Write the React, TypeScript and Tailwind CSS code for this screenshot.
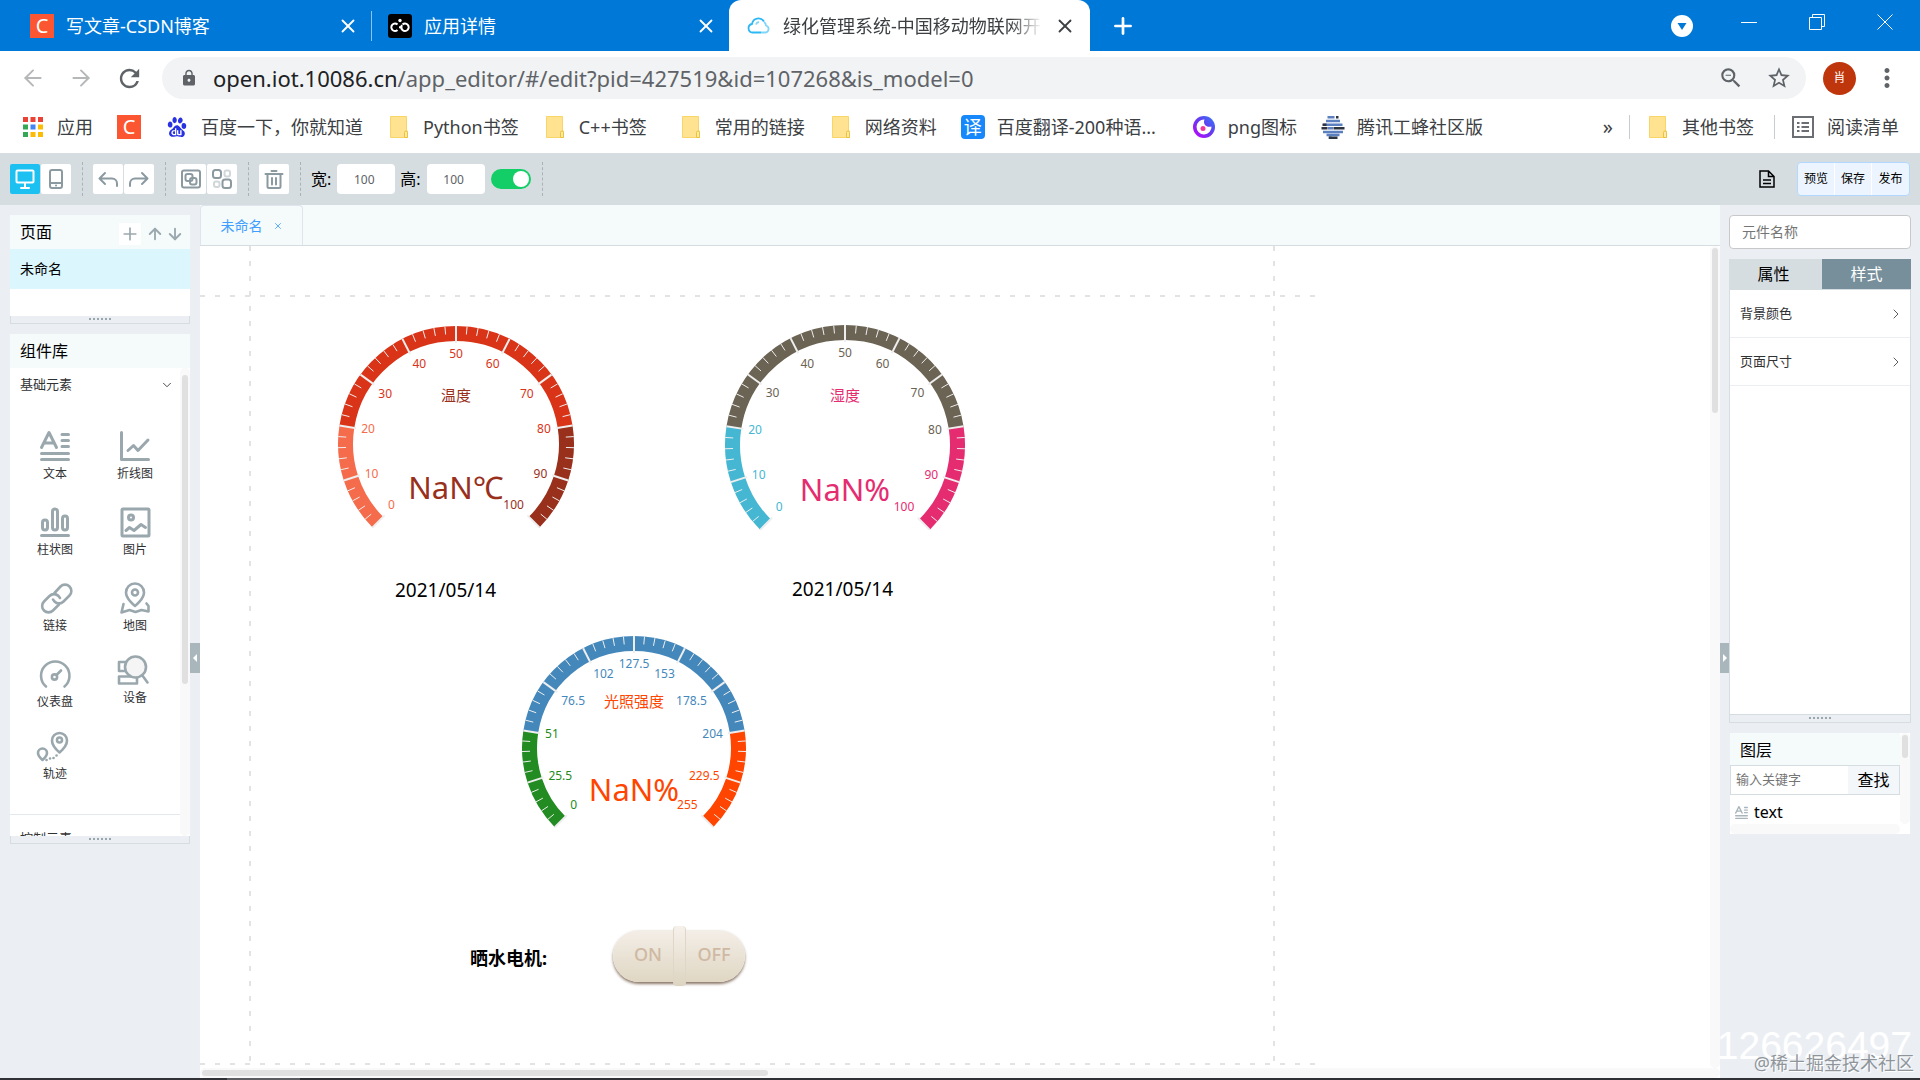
import React from 'react';
import { ArrowLeft, ArrowRight, ArrowUp, ArrowDown, ChevronDown, ChevronRight, Plus, X } from 'lucide-react';
import { MdLock, MdRefresh, MdStarBorder, MdMoreVert, MdZoomOut } from 'react-icons/md';
import { SiBaidu } from 'react-icons/si';

/* ---------- browser icons ---------- */

function CsdnLogo() {
  return (
    <span className="flex h-6 w-6 shrink-0 items-center justify-center bg-[#fc5531] text-xl leading-none text-white">C</span>
  );
}

function AppLogo() {
  return (
    <svg viewBox="0 0 24 24" className="h-6 w-6 shrink-0" fill="none" stroke="#fff" strokeWidth="2">
      <rect width="24" height="24" rx="3" fill="#000" stroke="none" />
      <path d="M9.500 10.500a3.700 3.700 0 1 0 0 5.500M11 13.200h3.500M14.500 10.500a3.700 3.700 0 1 1 0 5.500 3.700 3.700 0 0 1-.5-5" />
      <circle cx="12" cy="6.500" r="1.700" fill="#fff" stroke="none" />
    </svg>
  );
}

function CloudLogo() {
  return (
    <svg viewBox="0 0 24 24" className="h-6 w-6 shrink-0" fill="none" stroke="#2db7f5" strokeWidth="1.800">
      <path d="M14 18.500H5.500a4.300 4.300 0 0 1-.5-8.500 6.500 6.500 0 0 1 12-2.500" />
      <path d="M17 8a4.500 4.500 0 0 1 2 3.500 3.600 3.600 0 0 1-.5 7H14" stroke="#7fd6fb" />
      <path d="M9 10.500a3.500 3.500 0 0 1 3-2.500" stroke="#7fd6fb" />
    </svg>
  );
}

function AppsGrid() {
  const colors = ['#ea4335', '#ea4335', '#ea4335', '#34a853', '#4285f4', '#fbbc04', '#34a853', '#fbbc04', '#fbbc04'];
  return (
    <svg viewBox="0 0 20 20" className="h-5 w-5">
      {colors.map((c, i) => (
        <rect key={i} x={(i % 3) * 7.5} y={Math.floor(i / 3) * 7.5} width="5" height="5" fill={c} />
      ))}
    </svg>
  );
}

function Folder() {
  return (
    <svg viewBox="0 0 24 24" className="h-6 w-6" fill="#ffe391" stroke="#f8d566">
      <path d="M3.500 1.500h16v14.500h1v6.500h-17z" />
      <path d="M17.500 22.500v-5a1.500 1.500 0 0 1 3 0v5z" fill="#ffe9a6" stroke="#ecc23c" />
    </svg>
  );
}

function PngLogo() {
  return (
    <svg viewBox="0 0 24 24" className="h-6 w-6" fill="none">
      <defs>
        <linearGradient id="png-ring" x1="1" y1="0" x2="0" y2="1">
          <stop offset="0" stopColor="#2f7df6" />
          <stop offset=".5" stopColor="#6a35f0" />
          <stop offset="1" stopColor="#c800ff" />
        </linearGradient>
      </defs>
      <circle cx="12" cy="12" r="11" fill="url(#png-ring)" />
      <path d="M12.500 4.500c-1 2-.5 4.500 1 6 1.500 1.400 4 1.700 6 1a7.500 7.500 0 1 1-7-7z" fill="#fff" />
      <circle cx="11" cy="13.500" r="2.500" fill="#f0389c" />
    </svg>
  );
}

function TencentBee() {
  return (
    <svg viewBox="0 0 24 24" className="h-6 w-6" strokeWidth="2.400">
      <path d="M6.500 2.200h7M5 6h14M2.500 9.700h19M7 13.200h5M2 17h20M5.500 20h13M7.500 22.800h3" stroke="#5b7fbf" />
      <path d="M15 2.200h2.500M.5 13.200h6M12.500 13.200h11M1.500 9.700h4M8 22.800h8.500" stroke="#2c3440" />
    </svg>
  );
}

function ListIcon() {
  return (
    <svg viewBox="0 0 24 24" className="h-6 w-6" fill="none" stroke="#6b6f73" strokeWidth="2">
      <rect x="2" y="2" width="20" height="20" />
      <path d="M6 8h2.500M6 12h2.500M6 16h2.500M10.500 8H18M10.500 12H18M10.500 16H18" />
    </svg>
  );
}

/* ---------- editor icons ---------- */

function Icon({ children, className = 'h-[30px] w-[30px]' }) {
  return (
    <svg viewBox="0 0 30 30" className={`overflow-visible ${className}`} fill="none" stroke="currentColor" strokeWidth="3" strokeLinecap="round" strokeLinejoin="round">
      {children}
    </svg>
  );
}

const textShapes = (
  <>
    <path d="M1.500 16.500L9 1.500l7.500 15M4.500 12h9M22 3.500h6.500M22 9.500h6.500M22 15.500h6.500M1.500 22.500h27M1.500 28.500h27" />
  </>
);

const components = [
  { name: '文本', shape: textShapes },
  { name: '折线图', shape: <path d="M1.500 1.500v27h27M8 19.500l5.500-5 4.500 5L28 9" /> },
  {
    name: '柱状图',
    shape: (
      <>
        <rect x="2.500" y="13" width="5" height="10" rx="2.500" />
        <rect x="12.500" y="2" width="5" height="21" rx="2.500" />
        <rect x="22.500" y="9" width="5" height="14" rx="2.500" />
        <path d="M1.500 28.500h27" />
      </>
    ),
  },
  {
    name: '图片',
    shape: (
      <>
        <rect x="2" y="2" width="27" height="27" rx="1" />
        <circle cx="11" cy="10.500" r="2.500" />
        <path d="M6 23.500l3.500-3 4.500 3 7-6 4.500 3" />
      </>
    ),
  },
  {
    name: '链接',
    shape: (
      <g strokeWidth="2.600">
        <path d="M14.500 10l6-6.500a6.300 6.300 0 0 1 9 9l-6 6a6.300 6.300 0 0 1-9 0l-1.500-2" />
        <path d="M19 21.500l-6 6a6.300 6.300 0 0 1-9-9l5.500-5.500a6.300 6.300 0 0 1 9 0l1.500 2" />
      </g>
    ),
  },
  {
    name: '地图',
    shape: (
      <g strokeWidth="2.600">
        <path d="M15 23S6 16 6 9.500a9 9 0 0 1 18 0C24 16 15 23 15 23z" />
        <circle cx="15" cy="9.500" r="3" />
        <path d="M3.500 21L1.500 29.500l8-2.500 6 2 6-2 7 1.500V23l-2-2.500" />
      </g>
    ),
  },
  {
    name: '仪表盘',
    shape: (
      <g strokeWidth="2.600">
        <path d="M6 27.500a14.200 14.200 0 1 1 18.500 0" />
        <circle cx="14.500" cy="18" r="2.600" />
        <path d="M16.500 16l4.500-4.500" />
      </g>
    ),
  },
  {
    name: '设备',
    tight: true,
    shape: (
      <g strokeWidth="2.600">
        <path d="M8 7H-1v9h9M-1 21.500h18v7H-1z" />
        <path d="M22 20l5.500 7.500" />
        <circle cx="15.500" cy="12" r="10.500" fill="#f5f5f5" />
      </g>
    ),
  },
  {
    name: '轨迹',
    tight: true,
    shape: (
      <g strokeWidth="2.600">
        <path d="M19.500 21.500S12 15 12 9.500a7.500 7.500 0 0 1 15 0c0 5.500-7.500 12-7.500 12z" />
        <circle cx="19.500" cy="9" r="2.500" />
        <path d="M2.500 29S-2 25-2 22a4.500 4.500 0 0 1 9 0c0 3-4.500 7-4.500 7z" />
        <path d="M6.500 29h.1M10 27.500h.1M13.500 27h.1M16.500 24.500h.1" />
      </g>
    ),
  },
];

/* ---------- gauge ---------- */

const range = (n) => Array.from({ length: n }, (_, i) => i);

function Gauge({ radius, labels, colors, title, value, accent, className }) {
  const c = radius + 2;
  const point = (t, r) => {
    const a = ((225 - 270 * t) * Math.PI) / 180;
    return [c + r * Math.cos(a), c - r * Math.sin(a)];
  };
  const arc = (from, to) => {
    const r = radius - 7.5;
    const [x1, y1] = point(from, r);
    const [x2, y2] = point(to, r);
    return `M${x1} ${y1}A${r} ${r} 0 0 1 ${x2} ${y2}`;
  };
  const tick = (t, length) => {
    const [x1, y1] = point(t, radius);
    const [x2, y2] = point(t, radius - length);
    return `M${x1} ${y1}L${x2} ${y2}`;
  };
  return (
    <svg width={c * 2} height={c * 2} className={`absolute ${className}`} fill="none">
      <path d={arc(0, 0.2)} stroke={colors[0]} strokeWidth="15" />
      <path d={arc(0.2, 0.8)} stroke={colors[1]} strokeWidth="15" />
      <path d={arc(0.8, 1)} stroke={colors[2]} strokeWidth="15" />
      {range(51).map((i) => (
        <path key={i} d={tick(i / 50, i % 5 ? 8 : 17)} stroke="#eee" strokeWidth={i % 5 ? 1 : 2} />
      ))}
      {labels.map((label, i) => {
        const t = i / 10;
        const [x, y] = point(t, radius - 22);
        const ux = (x - c) / (radius - 22);
        const uy = (y - c) / (radius - 22);
        const dy = uy < -0.4 ? 6 : uy > 0.4 ? -7 : 0;
        return (
          <text
            key={label}
            x={x}
            y={y + dy + 4}
            fontSize="12"
            fill={i <= 2 ? colors[0] : i <= 8 ? colors[1] : colors[2]}
            textAnchor={ux < -0.4 ? 'start' : ux > 0.4 ? 'end' : 'middle'}
          >
            {label}
          </text>
        );
      })}
      <text x={c} y={c - radius * 0.4 + 4} fontSize="15" fill={accent} textAnchor="middle">{title}</text>
      <text x={c} y={c + radius * 0.4 + 8} fontSize="31" fill={accent} textAnchor="middle">{value}</text>
    </svg>
  );
}

const percent = ['0', '10', '20', '30', '40', '50', '60', '70', '80', '90', '100'];
const light = ['0', '25.5', '51', '76.5', '102', '127.5', '153', '178.5', '204', '229.5', '255'];

/* ---------- browser chrome ---------- */

function BrowserTabs() {
  return (
    <div className="flex h-[51px] shrink-0 items-center bg-[#0078d7] text-lg text-white">
      <div className="flex w-[371px] items-center gap-3 pr-3 pl-[30px]">
        <CsdnLogo />
        <span className="flex-1 truncate">写文章-CSDN博客</span>
        <button aria-label="关闭"><X size={22} /></button>
      </div>
      <div className="flex w-[358px] items-center gap-3 pr-3">
        <span className="mr-1 h-[30px] w-px bg-[#8ec3ef]" />
        <AppLogo />
        <span className="flex-1 truncate">应用详情</span>
        <button aria-label="关闭"><X size={22} /></button>
      </div>
      <div className="flex h-full w-[361px] items-center gap-3 rounded-t-xl bg-white pr-[14px] pl-[18px] text-[#3c4043]">
        <CloudLogo />
        <span className="flex-1 overflow-hidden whitespace-nowrap [mask-image:linear-gradient(to_right,#000_88%,transparent)]">绿化管理系统-中国移动物联网开放平台</span>
        <button aria-label="关闭"><X size={22} /></button>
      </div>
      <button aria-label="新标签页" className="ml-5"><Plus size={26} strokeWidth={2.5} /></button>
      <div className="ml-auto flex items-center gap-[52px] pr-[27px]">
        <button aria-label="搜索标签页" className="-mr-1">
          <svg viewBox="0 0 22 22" className="h-[22px] w-[22px]">
            <circle cx="11" cy="11" r="11" fill="#fff" />
            <path d="M6.500 8h9L11 15z" fill="#0078d7" />
          </svg>
        </button>
        <button aria-label="最小化" className="pb-2">
          <svg viewBox="0 0 16 16" className="h-4 w-4" stroke="#fff"><path d="M0 8.500h16" /></svg>
        </button>
        <button aria-label="还原" className="pb-2">
          <svg viewBox="0 0 16 16" className="h-4 w-4" stroke="#fff" fill="none"><path d="M.5 3.500h12v12H.5zM3.500 3V.5h12v12H13" /></svg>
        </button>
        <button aria-label="关闭窗口" className="pb-2">
          <svg viewBox="0 0 16 16" className="h-4 w-4" stroke="#fff"><path d="M.5.5l15 15M15.500.5l-15 15" /></svg>
        </button>
      </div>
    </div>
  );
}

function AddressBar() {
  return (
    <div className="flex h-[54px] shrink-0 items-center bg-white pr-[18px] pl-5 text-[#5f6368]">
      <button aria-label="后退" className="text-[#b5b7b9]"><ArrowLeft size={26} strokeWidth={1.8} /></button>
      <button aria-label="前进" className="ml-[22px] text-[#b5b7b9]"><ArrowRight size={26} strokeWidth={1.8} /></button>
      <button aria-label="刷新" className="ml-[21px]"><MdRefresh size={29} /></button>
      <div className="ml-[18px] flex h-[42px] flex-1 items-center rounded-full bg-[#f1f3f4] pr-[14px] pl-[18px]">
        <MdLock size={18} />
        <p className="ml-[15px] flex-1 text-[22px] text-[#5f6368]">
          <span className="text-[#202124]">open.iot.10086.cn</span>/app_editor/#/edit?pid=427519&amp;id=107268&amp;is_model=0
        </p>
        <button aria-label="缩放"><MdZoomOut size={26} /></button>
        <button aria-label="收藏" className="ml-[22px]"><MdStarBorder size={26} /></button>
      </div>
      <button className="ml-[17px] h-[33px] w-[33px] rounded-full bg-[#bf360c] text-xs text-white">肖</button>
      <button aria-label="菜单" className="ml-4"><MdMoreVert size={30} /></button>
    </div>
  );
}

const bookmarks = [
  { icon: <AppsGrid />, name: '应用' },
  { icon: <CsdnLogo />, name: '' },
  { icon: <SiBaidu size={20} color="#2932e1" />, name: '百度一下，你就知道' },
  { icon: <Folder />, name: 'Python书签' },
  { icon: <Folder />, name: 'C++书签', width: 'w-[76px]' },
  { icon: <Folder />, name: '常用的链接' },
  { icon: <Folder />, name: '网络资料' },
  { icon: <span className="flex h-6 w-6 items-center justify-center rounded bg-[#1788fb] text-lg leading-none text-white">译</span>, name: '百度翻译-200种语...', width: 'w-[171px]' },
  { icon: <PngLogo />, name: 'png图标' },
  { icon: <TencentBee />, name: '腾讯工蜂社区版' },
];

function Bookmark({ icon, name, width = '' }) {
  return (
    <a href="#" className="flex shrink-0 items-center gap-3 whitespace-nowrap">
      <span className="flex h-6 w-6 items-center justify-center">{icon}</span>
      {name && <span className={width}>{name}</span>}
    </a>
  );
}

function BookmarkBar() {
  return (
    <div className="flex h-12 shrink-0 items-center gap-6 bg-white pr-[21px] pb-1 pl-[21px] text-lg text-[#3c4043]">
      {bookmarks.map((b, i) => <Bookmark key={i} icon={b.icon} name={b.name} width={b.width} />)}
      <div className="ml-auto flex items-center gap-4">
        <button className="text-xl leading-none">»</button>
        <span className="h-6 w-px bg-[#c9cccf]" />
        <Bookmark icon={<Folder />} name="其他书签" />
        <span className="ml-1 h-6 w-px bg-[#c9cccf]" />
        <Bookmark icon={<ListIcon />} name="阅读清单" />
      </div>
    </div>
  );
}

/* ---------- editor ---------- */

function ToolButton({ label, active = false, children }) {
  return (
    <button
      aria-label={label}
      className={`flex h-[30px] w-[30px] items-center justify-center rounded-xs ${active ? 'bg-[#1cc1f1] text-white' : 'bg-white text-[#8b9aa1]'}`}
    >
      <svg viewBox="0 0 20 20" className="h-5 w-5" fill="none" stroke="currentColor" strokeWidth="2" strokeLinecap="round" strokeLinejoin="round">
        {children}
      </svg>
    </button>
  );
}

function Divider() {
  return <span className="mr-[10px] ml-[11px] h-[34px] border-l border-dashed border-[#a9b3b7]" />;
}

function Toolbar() {
  return (
    <div className="flex h-[52px] shrink-0 items-center bg-[#d5dde0] px-[10px]">
      <div className="flex gap-px">
        <ToolButton label="桌面" active>
          <rect x="1.500" y="1.500" width="17" height="12" rx="1" />
          <path d="M10 14v4.500M6 19h8" />
        </ToolButton>
        <ToolButton label="手机">
          <rect x="4" y="1" width="12" height="18" rx="2" />
          <path d="M4 14h12M10 16.500h.1" />
        </ToolButton>
      </div>
      <Divider />
      <div className="flex gap-px">
        <ToolButton label="撤销"><path d="M7 4l-5.500 5.500L7 15M2 9.500h12a5 5 0 0 1 5 5V17" /></ToolButton>
        <ToolButton label="重做"><path d="M13 4l5.500 5.500L13 15M18 9.500H6a5 5 0 0 0-5 5V17" /></ToolButton>
      </div>
      <Divider />
      <div className="flex gap-px">
        <ToolButton label="组合">
          <rect x="1" y="1.500" width="18" height="17" rx="2" />
          <rect x="4.500" y="5" width="7" height="7" rx="2" />
          <rect x="9" y="9" width="6.500" height="6.500" rx="2" />
        </ToolButton>
        <ToolButton label="取消组合">
          <rect x="1" y="1" width="8" height="8" rx="2.500" />
          <rect x="10.500" y="10.500" width="8.500" height="8.500" rx="2.500" />
          <rect x="12.500" y="1.500" width="5.500" height="6" rx="2" opacity=".4" />
          <rect x="2" y="12.500" width="5.500" height="5.500" rx="2" opacity=".4" />
        </ToolButton>
      </div>
      <Divider />
      <ToolButton label="删除">
        <path d="M1.500 5h17M3.500 5v12.500a1.500 1.500 0 0 0 1.500 1.500h10a1.500 1.500 0 0 0 1.500-1.500V5M8 9v6.500M12 9v6.500M7.500 2h5" />
      </ToolButton>
      <Divider />
      <label htmlFor="canvas-w" className="text-base text-black">宽:</label>
      <input id="canvas-w" defaultValue="100" className="ml-[6px] h-[30px] w-[58px] rounded-sm bg-white pr-1 text-center text-xs text-[#606266]" />
      <label htmlFor="canvas-h" className="ml-[5px] text-base text-black">高:</label>
      <input id="canvas-h" defaultValue="100" className="ml-[6px] h-[30px] w-[58px] rounded-sm bg-white pr-1 text-center text-xs text-[#606266]" />
      <input
        type="checkbox"
        aria-label="等比例"
        defaultChecked
        className="ml-[6px] flex h-5 w-10 appearance-none items-center justify-end rounded-full bg-[#13ce66] px-[2px] before:h-4 before:w-4 before:rounded-full before:bg-white"
      />
      <Divider />
      <button aria-label="文档" className="ml-auto text-black">
        <svg viewBox="0 0 16 18" className="h-[18px] w-4" fill="none" stroke="currentColor" strokeWidth="1.500">
          <path d="M1 1h8.500L15 6.500V17H1zM9.500 1v5.500H15M4 10h8M4 13.500h8" />
        </svg>
      </button>
      <div className="ml-[22px] flex h-[34px] divide-x divide-white rounded-sm border border-[#b3d8ff] bg-[#ecf5ff] text-xs text-black">
        <button className="w-[37px]">预览</button>
        <button className="w-[37px]">保存</button>
        <button className="w-[37px]">发布</button>
      </div>
    </div>
  );
}

function DragHandle() {
  return (
    <div className="flex h-2 shrink-0 justify-center gap-[2px] border border-t-0 border-[#d5dde0] pt-[2px]">
      {range(6).map((i) => <span key={i} className="h-[2px] w-[2px] bg-[#9aa8ae]" />)}
    </div>
  );
}

function LeftPanel() {
  return (
    <aside className="flex w-[200px] shrink-0 bg-[#ebeff4]">
      <div className="flex w-[190px] flex-col pt-[10px] pl-[10px]">
        <div className="flex h-[34px] items-center bg-[#f5fafb] pr-[6px] pl-[10px] text-base text-black">
          <h2 className="flex-1">页面</h2>
          <div className="flex items-center gap-[2px] pt-1 text-[#9aa8ae]">
            <button aria-label="新增" className="mr-[3px] flex h-[22px] w-[22px] items-center justify-center bg-white"><Plus size={20} /></button>
            <button aria-label="上移"><ArrowUp size={18} strokeWidth={2.5} /></button>
            <button aria-label="下移"><ArrowDown size={18} strokeWidth={2.5} /></button>
          </div>
        </div>
        <button className="h-10 bg-[#dcf6fd] pl-[10px] text-left text-sm text-black">未命名</button>
        <div className="h-[27px] bg-white" />
        <DragHandle />

        <h2 className="mt-[10px] flex h-[34px] items-center bg-[#f5fafb] pl-[10px] text-base text-black">组件库</h2>
        <div className="flex h-[468px] overflow-hidden bg-white">
          <div className="flex-1">
            <button className="flex h-[34px] w-full items-center justify-between pr-[6px] pl-[10px] text-[13px] text-[#303133]">
              基础元素
              <ChevronDown size={14} strokeWidth={1.5} />
            </button>
            <div className="grid grid-cols-2 border-b border-[#e3e9ed] px-[5px] pt-[17px] pb-[15px]">
              {components.map((item) => (
                <button key={item.name} className={`flex h-[76px] flex-col items-center gap-[5px] text-xs text-[#303133] ${item.tight ? 'pt-2' : 'pt-3'}`}>
                  <span className="text-[#9aa8ae]"><Icon>{item.shape}</Icon></span>
                  {item.name}
                </button>
              ))}
            </div>
            <button className="flex h-12 w-full items-center pl-[10px] text-[13px] text-[#303133]">控制元素</button>
          </div>
          <div className="w-[10px] rounded-full bg-[#f9f9f9] pt-[7px]">
            <div className="mx-auto h-[309px] w-[6px] rounded-full bg-[#e0e0e0]" />
          </div>
        </div>
        <DragHandle />
      </div>
      <button aria-label="收起左侧" className="mt-8 flex h-[30px] w-[10px] items-center justify-center self-center bg-[#a9b6bc]">
        <svg viewBox="0 0 4 8" className="h-2 w-1" fill="#fff"><path d="M4 0v8L0 4z" /></svg>
      </button>
    </aside>
  );
}

function Canvas() {
  return (
    <main className="flex min-w-0 flex-1 flex-col bg-white">
      <div className="flex h-[41px] shrink-0 border-b border-[#d5dde0] bg-[#f5fafb]">
        <div className="flex w-[103px] items-center justify-center gap-[10px] rounded-t-sm border border-b-0 border-[#dfe4ed] text-sm text-[#409eff]">
          未命名
          <button aria-label="关闭页面"><X size={10} strokeWidth={2} /></button>
        </div>
      </div>
      <div className="flex min-h-0 flex-1">
        <div className="relative min-w-0 flex-1 overflow-hidden">
          {/* page guides */}
          <div className="absolute top-0 left-[49px] h-[816px] w-[2px] bg-[repeating-linear-gradient(to_bottom,#e3e3e3_0_5px,transparent_5px_15px)]" />
          <div className="absolute top-0 left-[1073px] h-[816px] w-[2px] bg-[repeating-linear-gradient(to_bottom,#e3e3e3_0_5px,transparent_5px_15px)]" />
          <div className="absolute top-[49px] left-0 h-[2px] w-[1117px] bg-[repeating-linear-gradient(to_right,#e3e3e3_0_5px,transparent_5px_15px)]" />
          <div className="absolute top-[817px] left-0 h-[2px] w-[1117px] bg-[repeating-linear-gradient(to_right,#e3e3e3_0_5px,transparent_5px_15px)]" />

          <Gauge className="top-[78px] left-[136px]" radius={118} labels={percent} colors={['#f56c4c', '#d93418', '#98301c']} title="温度" value="NaN℃" accent="#98301c" />
          <Gauge className="top-[77px] left-[523px]" radius={120} labels={percent} colors={['#45b7d3', '#6b6353', '#e52c71']} title="湿度" value="NaN%" accent="#e52c71" />
          <Gauge className="top-[388px] left-[320px]" radius={112} labels={light} colors={['#228b22', '#4488bb', '#ff4500']} title="光照强度" value="NaN%" accent="#ff4500" />

          <p className="absolute top-[330px] left-[195px] text-[19px] leading-7 text-black">2021/05/14</p>
          <p className="absolute top-[329px] left-[592px] text-[19px] leading-7 text-black">2021/05/14</p>
          <p className="absolute top-[698px] left-[270px] text-lg font-bold text-black">晒水电机:</p>

          <div className="absolute top-[684px] left-[413px] flex h-[52px] w-[132px] rounded-full bg-gradient-to-b from-[#f4eee8] to-[#dfd7c3] text-lg font-medium text-[#cfb9a3] shadow-[0_2px_3px_#8b7767]">
            <button className="flex-1 pb-1 pl-1">ON</button>
            <button className="flex-1 pb-1 pl-1">OFF</button>
            <span className="absolute -top-1 -bottom-1 left-[60px] w-[13px] rounded-sm border-x border-[#e0d6c8] bg-gradient-to-b from-[#f7f1ec] to-[#ddd4c0]" />
          </div>
        </div>
        <div className="w-[10px] rounded-full bg-[#f9f9f9] pt-[2px]">
          <div className="mx-auto h-[165px] w-[6px] rounded-full bg-[#e0e0e0]" />
        </div>
      </div>
      <div className="flex h-[10px] shrink-0 items-center rounded-full bg-[#f9f9f9] px-[2px]">
        <div className="h-[6px] w-[566px] rounded-full bg-[#e0e0e0]" />
      </div>
    </main>
  );
}

function RightPanel() {
  return (
    <aside className="flex w-[200px] shrink-0 bg-[#ebeff4]">
      <button aria-label="收起右侧" className="mt-8 flex h-[30px] w-[10px] items-center justify-center self-center bg-[#a9b6bc]">
        <svg viewBox="0 0 4 8" className="h-2 w-1" fill="#fff"><path d="M0 0v8l4-4z" /></svg>
      </button>
      <div className="-ml-px flex w-[182px] flex-col pt-[10px]">
        <input aria-label="元件名称" placeholder="元件名称" className="h-[34px] w-full shrink-0 rounded-sm border border-[#c8c8c8] bg-white px-3 pb-[2px] text-sm placeholder:text-[#757575]" />
        <div className="mt-[10px] flex h-[30px] shrink-0 text-base">
          <button className="w-[93px] bg-[#d5dde0] pr-1 text-black">属性</button>
          <button className="flex-1 bg-[#778f9b] text-white">样式</button>
        </div>
        <div className="h-[426px] shrink-0 border border-[#d5dde0] bg-white text-[13px] text-[#303133]">
          <button className="flex h-12 w-full items-center justify-between border-b border-[#ebeef5] pr-[6px] pl-[10px]">
            背景颜色
            <ChevronRight size={16} strokeWidth={1.2} />
          </button>
          <button className="flex h-12 w-full items-center justify-between border-b border-[#ebeef5] pr-[6px] pl-[10px]">
            页面尺寸
            <ChevronRight size={16} strokeWidth={1.2} />
          </button>
        </div>
        <DragHandle />

        <div className="mx-px mt-[10px] flex h-[101px] shrink-0 bg-white">
          <div className="flex flex-1 flex-col">
            <h2 className="flex h-8 items-center bg-[#f5fafb] pt-[2px] pl-[10px] text-base text-black">图层</h2>
            <div className="flex h-[30px] border border-[#d5dde0]">
              <input aria-label="输入关键字" placeholder="输入关键字" className="w-0 flex-1 px-[5px] text-[13px] placeholder:text-[#757575]" />
              <button className="w-[51px] bg-[#f3f7fa] text-base text-black">查找</button>
            </div>
            <button className="flex h-[29px] items-center gap-[6px] pt-[5px] pl-[5px] text-base text-black">
              <span className="text-[#a9b5ba]"><Icon className="h-[13px] w-[13px]">{textShapes}</Icon></span>
              text
            </button>
            <div className="h-[10px] rounded-full bg-[#f9f9f9]" />
          </div>
          <div className="mb-[10px] w-[10px] rounded-full bg-[#f9f9f9] pt-[2px]">
            <div className="mx-auto h-[23px] w-[6px] rounded-full bg-[#e0e0e0]" />
          </div>
        </div>
      </div>
    </aside>
  );
}

export default function App() {
  return (
    <div className="relative flex h-screen flex-col overflow-hidden font-['Noto_Sans','Noto_Sans_CJK_SC',sans-serif]">
      <BrowserTabs />
      <AddressBar />
      <BookmarkBar />
      <Toolbar />
      <div className="flex min-h-0 flex-1">
        <LeftPanel />
        <Canvas />
        <RightPanel />
      </div>
      <div className="h-[2px] shrink-0 bg-[#2f3136] pl-[227px]">
        <div className="h-full w-[73px] bg-[#5b5d61]" />
      </div>
      <p className="pointer-events-none absolute right-2 bottom-[14px] font-['Liberation_Sans',sans-serif] text-[39px] leading-10 text-white">126626497</p>
      <p className="pointer-events-none absolute right-[6px] bottom-1 text-lg leading-[26px] text-[#8f959b] [text-shadow:1px_1px_0_#fff]">@稀土掘金技术社区</p>
    </div>
  );
}
